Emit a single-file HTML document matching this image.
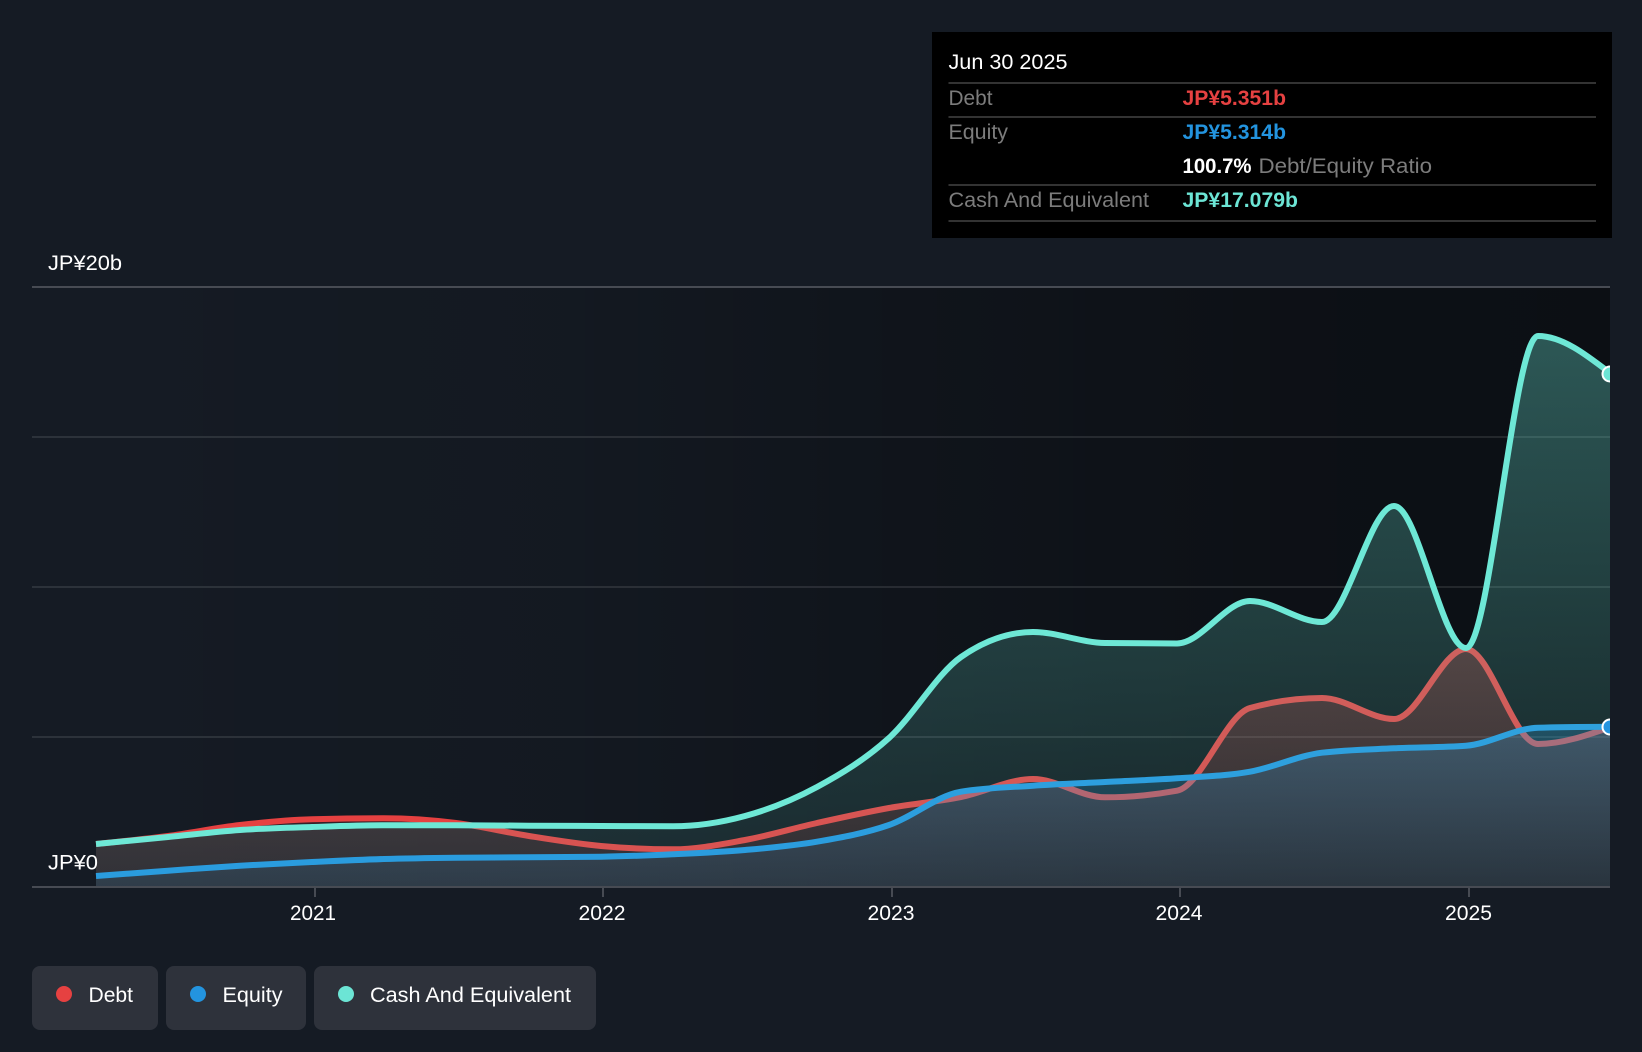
<!DOCTYPE html>
<html>
<head>
<meta charset="utf-8">
<title>Debt to Equity History</title>
<style>
html,body{margin:0;padding:0;background:#151b24;width:1642px;height:1052px;overflow:hidden}
svg{display:block;position:absolute;left:0;top:0}
text{font-family:"Liberation Sans","Noto Sans CJK JP",sans-serif;font-size:21px;fill:#fff}
.g{fill:#7c7c7c}
.b{font-weight:bold}
</style>
</head>
<body>
<svg width="1642" height="1052" viewBox="0 0 1642 1052" xmlns="http://www.w3.org/2000/svg">
<defs>
<linearGradient id="bgd" gradientUnits="userSpaceOnUse" x1="96" y1="0" x2="1610" y2="0">
<stop offset="0" stop-color="#000" stop-opacity="0"/>
<stop offset=".306" stop-color="#000" stop-opacity=".08"/>
<stop offset=".531" stop-color="#000" stop-opacity=".25"/>
<stop offset=".795" stop-color="#000" stop-opacity=".4"/>
<stop offset="1" stop-color="#000" stop-opacity=".44"/>
</linearGradient>
<linearGradient id="fc" gradientUnits="userSpaceOnUse" x1="0" y1="287" x2="0" y2="887">
<stop offset="0" stop-color="#6ce5d5" stop-opacity=".36"/>
<stop offset="1" stop-color="#6ce5d5" stop-opacity=".09"/>
</linearGradient>
<linearGradient id="fd" gradientUnits="userSpaceOnUse" x1="0" y1="640" x2="0" y2="887">
<stop offset="0" stop-color="#e64141" stop-opacity=".3"/>
<stop offset="1" stop-color="#e64141" stop-opacity=".1"/>
</linearGradient>
<linearGradient id="fe" gradientUnits="userSpaceOnUse" x1="0" y1="727" x2="0" y2="887">
<stop offset="0" stop-color="#2394df" stop-opacity=".28"/>
<stop offset="1" stop-color="#2394df" stop-opacity=".11"/>
</linearGradient>
<clipPath id="pc"><rect x="32" y="270" width="1578" height="620"/></clipPath>
</defs>

<rect x="96" y="288" width="1514" height="599" fill="url(#bgd)"/>

<rect x="32" y="436" width="1578" height="2" fill="#fff" fill-opacity=".1"/>
<rect x="32" y="586" width="1578" height="2" fill="#fff" fill-opacity=".1"/>
<rect x="32" y="736" width="1578" height="2" fill="#fff" fill-opacity=".1"/>

<g clip-path="url(#pc)">
<path fill="url(#fd)" d="M96,844 C120,841.58 144,839.17 168,836 C192,832.83 216,827.78 240,825 C264,822.22 288,819.97 312,819.3 C336,818.63 360,818.3 384,818.3 C408,818.3 432,820.05 456,823 C480,825.95 505,832.17 529,836 C553,839.83 577,843.8 601,846 C625,848.2 649,849.3 673,849.3 C697,849.3 721,844.38 745,840 C769,835.62 793,828.33 817,823 C841,817.67 865,812.33 889,808 C913,803.67 937,801.83 961,797 C985,792.17 1009,779 1033,779 C1057,779 1081,797.3 1105,797.3 C1129,797.3 1153,795.1 1177,790.7 C1201,786.3 1226,714.67 1250,708 C1274,701.33 1298,698 1322,698 C1346,698 1370,719 1394,719 C1418,719 1442,649 1466,649 C1490,649 1514,744 1538,744 C1562,744 1586,735.65 1610,727.3 L1610,887 L96,887 Z"/>
<path fill="none" stroke="#e64141" stroke-width="6" d="M96,844 C120,841.58 144,839.17 168,836 C192,832.83 216,827.78 240,825 C264,822.22 288,819.97 312,819.3 C336,818.63 360,818.3 384,818.3 C408,818.3 432,820.05 456,823 C480,825.95 505,832.17 529,836 C553,839.83 577,843.8 601,846 C625,848.2 649,849.3 673,849.3 C697,849.3 721,844.38 745,840 C769,835.62 793,828.33 817,823 C841,817.67 865,812.33 889,808 C913,803.67 937,801.83 961,797 C985,792.17 1009,779 1033,779 C1057,779 1081,797.3 1105,797.3 C1129,797.3 1153,795.1 1177,790.7 C1201,786.3 1226,714.67 1250,708 C1274,701.33 1298,698 1322,698 C1346,698 1370,719 1394,719 C1418,719 1442,649 1466,649 C1490,649 1514,744 1538,744 C1562,744 1586,735.65 1610,727.3"/>

<path fill="url(#fe)" d="M96,876 C120,874.21 144,872.42 168,870.7 C192,868.98 216,867.15 240,865.7 C264,864.25 288,863.12 312,862 C336,860.88 360,859.72 384,859 C408,858.28 432,857.97 456,857.7 C480,857.43 505,857.47 529,857.3 C553,857.13 577,857.1 601,856.7 C625,856.3 649,855.42 673,854.3 C697,853.18 721,852.1 745,850 C769,847.9 793,845.87 817,841.7 C841,837.53 865,833.33 889,825 C913,816.67 937,795.7 961,791.7 C985,787.7 1009,787.32 1033,785.7 C1057,784.08 1081,783.23 1105,782 C1129,780.77 1153,780.02 1177,778.3 C1201,776.58 1226,775.97 1250,771.7 C1274,767.43 1298,755.63 1322,752.7 C1346,749.77 1370,749.47 1394,748.3 C1418,747.13 1442,747.43 1466,745.7 C1490,743.97 1514,728.37 1538,727.7 C1562,727.03 1586,726.87 1610,726.7 L1610,887 L96,887 Z"/>
<path fill="none" stroke="#2394df" stroke-width="6" d="M96,876 C120,874.21 144,872.42 168,870.7 C192,868.98 216,867.15 240,865.7 C264,864.25 288,863.12 312,862 C336,860.88 360,859.72 384,859 C408,858.28 432,857.97 456,857.7 C480,857.43 505,857.47 529,857.3 C553,857.13 577,857.1 601,856.7 C625,856.3 649,855.42 673,854.3 C697,853.18 721,852.1 745,850 C769,847.9 793,845.87 817,841.7 C841,837.53 865,833.33 889,825 C913,816.67 937,795.7 961,791.7 C985,787.7 1009,787.32 1033,785.7 C1057,784.08 1081,783.23 1105,782 C1129,780.77 1153,780.02 1177,778.3 C1201,776.58 1226,775.97 1250,771.7 C1274,767.43 1298,755.63 1322,752.7 C1346,749.77 1370,749.47 1394,748.3 C1418,747.13 1442,747.43 1466,745.7 C1490,743.97 1514,728.37 1538,727.7 C1562,727.03 1586,726.87 1610,726.7"/>

<path fill="url(#fc)" d="M96,844 C120,841.67 144,839.33 168,837 C192,834.67 216,831.67 240,830 C264,828.33 288,827.78 312,827 C336,826.22 360,825.3 384,825.3 C408,825.3 432,825.3 456,825.3 C480,825.3 505,825.58 529,825.7 C553,825.82 577,825.9 601,826 C625,826.1 649,826.3 673,826.3 C697,826.3 721,822.55 745,816 C769,809.45 793,800 817,787 C841,774 865,759.67 889,738 C913,716.33 937,673.67 961,657 C985,640.33 1009,632 1033,632 C1057,632 1081,642.67 1105,643 C1129,643.33 1153,643.5 1177,643.5 C1201,643.5 1226,601 1250,601 C1274,601 1298,622 1322,622 C1346,622 1370,506 1394,506 C1418,506 1442,648 1466,648 C1490,648 1514,336 1538,336 C1562,336 1586,354.5 1610,373 L1610,887 L96,887 Z"/>
<path fill="none" stroke="#6ee8d6" stroke-width="6" d="M96,844 C120,841.67 144,839.33 168,837 C192,834.67 216,831.67 240,830 C264,828.33 288,827.78 312,827 C336,826.22 360,825.3 384,825.3 C408,825.3 432,825.3 456,825.3 C480,825.3 505,825.58 529,825.7 C553,825.82 577,825.9 601,826 C625,826.1 649,826.3 673,826.3 C697,826.3 721,822.55 745,816 C769,809.45 793,800 817,787 C841,774 865,759.67 889,738 C913,716.33 937,673.67 961,657 C985,640.33 1009,632 1033,632 C1057,632 1081,642.67 1105,643 C1129,643.33 1153,643.5 1177,643.5 C1201,643.5 1226,601 1250,601 C1274,601 1298,622 1322,622 C1346,622 1370,506 1394,506 C1418,506 1442,648 1466,648 C1490,648 1514,336 1538,336 C1562,336 1586,354.5 1610,373"/>

<circle cx="1610" cy="727" r="7.5" fill="#2394df" stroke="#fff" stroke-width="2"/>
<circle cx="1610" cy="374" r="7.5" fill="#6ce5d5" stroke="#fff" stroke-width="2"/>
</g>

<rect x="32" y="286" width="1578" height="2" fill="#474b53"/>
<rect x="32" y="886" width="1578" height="2" fill="#474b53"/>
<rect x="314" y="888" width="2" height="9" fill="#474b53"/>
<rect x="602" y="888" width="2" height="9" fill="#474b53"/>
<rect x="891" y="888" width="2" height="9" fill="#474b53"/>
<rect x="1179" y="888" width="2" height="9" fill="#474b53"/>
<rect x="1468" y="888" width="2" height="9" fill="#474b53"/>

<text x="48" y="270" textLength="74" lengthAdjust="spacingAndGlyphs">JP¥20b</text>
<text x="48" y="869.5" textLength="50" lengthAdjust="spacingAndGlyphs">JP¥0</text>
<text x="290" y="920" textLength="46" lengthAdjust="spacingAndGlyphs">2021</text>
<text x="578.5" y="920" textLength="47" lengthAdjust="spacingAndGlyphs">2022</text>
<text x="867.5" y="920" textLength="47" lengthAdjust="spacingAndGlyphs">2023</text>
<text x="1155.5" y="920" textLength="47" lengthAdjust="spacingAndGlyphs">2024</text>
<text x="1445" y="920" textLength="47" lengthAdjust="spacingAndGlyphs">2025</text>

<rect x="932" y="32" width="680" height="206" fill="#000"/>
<text x="948.5" y="69" textLength="119" lengthAdjust="spacingAndGlyphs">Jun 30 2025</text>
<rect x="948.5" y="82" width="647.5" height="2" fill="#333"/>
<text class="g" x="948.5" y="105" textLength="44" lengthAdjust="spacingAndGlyphs">Debt</text>
<text class="b" x="1182.5" y="105" textLength="103.5" lengthAdjust="spacingAndGlyphs" style="fill:#e64141">JP¥5.351b</text>
<rect x="948.5" y="116" width="647.5" height="2" fill="#333"/>
<text class="g" x="948.5" y="139" textLength="59.5" lengthAdjust="spacingAndGlyphs">Equity</text>
<text class="b" x="1182.5" y="139" textLength="103.5" lengthAdjust="spacingAndGlyphs" style="fill:#2394df">JP¥5.314b</text>
<text class="b" x="1182.5" y="173" textLength="69" lengthAdjust="spacingAndGlyphs">100.7%</text>
<text class="g" x="1258.5" y="173" textLength="173.5" lengthAdjust="spacingAndGlyphs">Debt/Equity Ratio</text>
<rect x="948.5" y="184" width="647.5" height="2" fill="#333"/>
<text class="g" x="948.5" y="207" textLength="200.5" lengthAdjust="spacingAndGlyphs">Cash And Equivalent</text>
<text class="b" x="1182.5" y="207" textLength="115.5" lengthAdjust="spacingAndGlyphs" style="fill:#6ce5d5">JP¥17.079b</text>
<rect x="948.5" y="220" width="647.5" height="2" fill="#333"/>

<rect x="32" y="966" width="126" height="64" rx="8" fill="#2e323b"/>
<circle cx="64" cy="994" r="8" fill="#e64141"/>
<text x="88.5" y="1002" textLength="44.5" lengthAdjust="spacingAndGlyphs">Debt</text>
<rect x="166" y="966" width="140" height="64" rx="8" fill="#2e323b"/>
<circle cx="198" cy="994" r="8" fill="#2394df"/>
<text x="222.5" y="1002" textLength="60" lengthAdjust="spacingAndGlyphs">Equity</text>
<rect x="314" y="966" width="282" height="64" rx="8" fill="#2e323b"/>
<circle cx="346" cy="994" r="8" fill="#6ce5d5"/>
<text x="370" y="1002" textLength="201" lengthAdjust="spacingAndGlyphs">Cash And Equivalent</text>
</svg>
</body>
</html>
